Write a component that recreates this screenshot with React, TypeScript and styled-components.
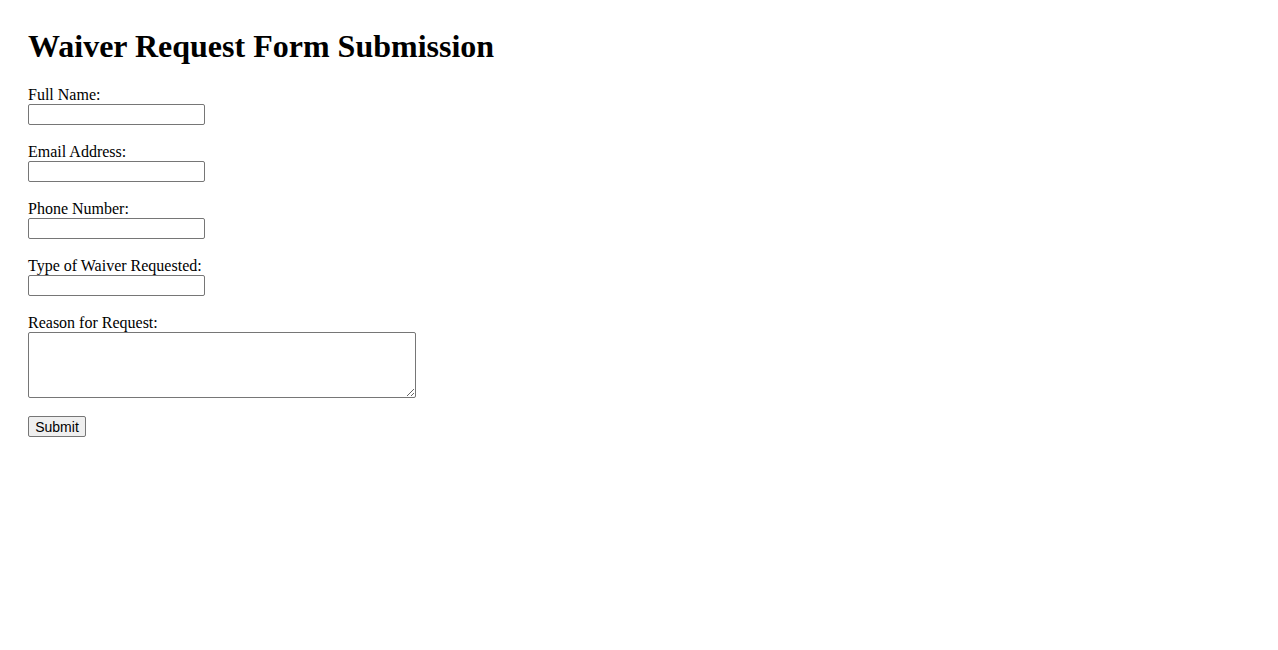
import styled, { createGlobalStyle } from "styled-components";

const GlobalStyle = createGlobalStyle`
  body {
    margin: 0;
    background: #ffffff;
    color: #000000;
    font-family: "Liberation Serif", "Times New Roman", serif;
    font-size: 16px;
  }
`;

const fields = [
  { id: "fullName", label: "Full Name:", type: "text" },
  { id: "email", label: "Email Address:", type: "email" },
  { id: "phone", label: "Phone Number:", type: "tel" },
  { id: "waiverType", label: "Type of Waiver Requested:", type: "text" },
];

function App() {
  return (
    <Page>
      <GlobalStyle />
      <Title>Waiver Request Form Submission</Title>
      <Form onSubmit={(e) => e.preventDefault()}>
        {fields.map((f) => (
          <Field key={f.id}>
            <Label htmlFor={f.id}>{f.label}</Label>
            <Input id={f.id} name={f.id} type={f.type} />
          </Field>
        ))}
        <Field $last>
          <Label htmlFor="reason">Reason for Request:</Label>
          <TextArea id="reason" name="reason" rows={4} cols={50} />
        </Field>
        <SubmitButton type="submit">Submit</SubmitButton>
      </Form>
    </Page>
  );
}

export default App;

const Page = styled.div`
  padding: 28px;
`;

const Title = styled.h1`
  margin: 0 0 20px;
  font-size: 32px;
  font-weight: bold;
  line-height: 37px;
`;

const Form = styled.form`
  display: flex;
  flex-direction: column;
  align-items: flex-start;
`;

const Field = styled.div<{ $last?: boolean }>`
  display: flex;
  flex-direction: column;
  align-items: flex-start;
  margin-bottom: ${(p) => (p.$last ? "18px" : "17px")};
`;

const Label = styled.label`
  line-height: 18px;
  margin-top: 1px;
`;

const Input = styled.input`
  box-sizing: border-box;
  width: 177px;
  height: 21px;
  padding: 1px 2px;
  border: 1px solid #767676;
  border-radius: 2px;
  background: #ffffff;
  font-family: "Liberation Sans", Arial, sans-serif;
  font-size: 13.33px;
`;

const TextArea = styled.textarea`
  box-sizing: border-box;
  width: 388px;
  height: 66px;
  padding: 2px;
  border: 1px solid #767676;
  border-radius: 2px;
  background: #ffffff;
  font-family: "Liberation Mono", monospace;
  font-size: 13.33px;
`;

const SubmitButton = styled.button`
  box-sizing: border-box;
  width: 58px;
  height: 21px;
  padding: 1px 6px;
  border: 1px solid #767676;
  border-radius: 2px;
  background: #efefef;
  color: #000000;
  font-family: "Liberation Sans", Arial, sans-serif;
  font-size: 14px;
`;
